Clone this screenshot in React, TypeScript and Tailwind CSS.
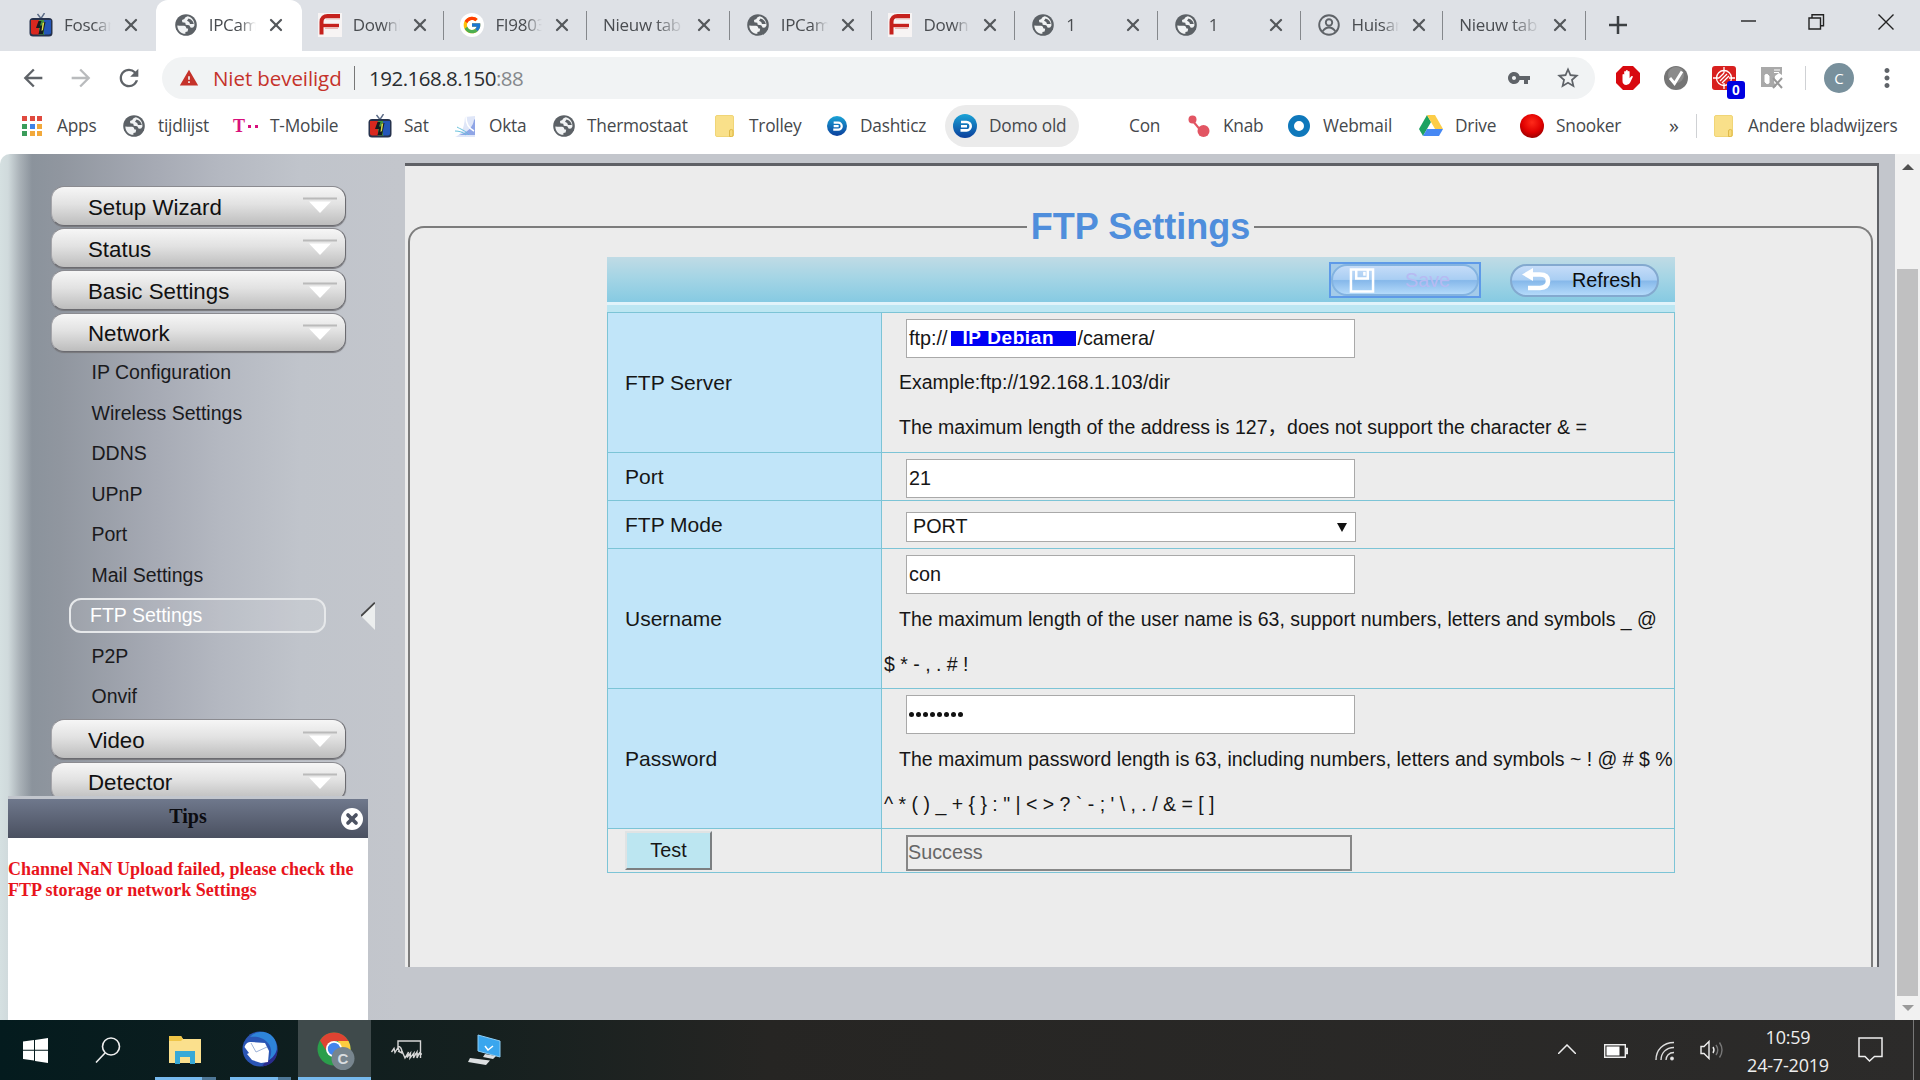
import { ReactNode } from "react";
import { LuX } from "react-icons/lu";
import { FcGoogle } from "react-icons/fc";
import { MdArrowBack, MdArrowForward, MdRefresh, MdStarBorder, MdVpnKey, MdWarning, MdMoreVert } from "react-icons/md";

const Globe = () => (
    <svg viewBox="0 0 22 22" className="h-[22px] w-[22px] shrink-0">
        <circle cx="11" cy="11" r="10.8" fill="#5c6166" />
        <path d="M2.300 11.500c2 .2 4.500.3 6.500.2 2 .2 2.600 1.300 2.400 2.600l2 .5-.6 2.800-2.200.4v1.800c-4.500 0-8-3.600-8.100-8.300Z" fill="#f1f3f4" />
        <path d="M12.800 2.300c-1.800.5-3 1.400-3.400 2.700L7 6l.3 2.300 3 .4.400 2 3.500.5 1.600 2.500 2.300-.2 1.300-1.700c.5-4.500-2.300-8.300-6.600-9.500Z" fill="#f1f3f4" />
        <path d="M13.500 4.500 12 6.800l2.200 1.200.8 1.900h3.800c-.6-2.600-2.400-4.600-5.300-5.400Z" fill="#5c6166" />
    </svg>
);

const TvIcon = () => (
    <svg viewBox="0 0 24 24" className="h-6 w-6 shrink-0">
        <path d="M8.500 1 12 5.500 15.500 0" fill="none" stroke="#5b6b86" strokeWidth="1.400" />
        <rect x="0.500" y="5" width="23" height="18.500" rx="3.500" fill="#26324d" />
        <path d="M2 7h8v14.500H4a2 2 0 0 1-2-2Z" fill="#d9281f" />
        <path d="M10 7h6v14.500h-6Z" fill="#3f9440" />
        <path d="M15 7h7v12.500a2 2 0 0 1-2 2h-5Z" fill="#2456b8" />
        <path d="m9.500 8-2.500 7h4l-1.500 6 4.500 0 2.500-12-2.500 0-1 3.500h-2l1.500-4.500Z" fill="#151a20" />
        <path d="m13.500 10 1.800-1-1.300 8-1.500 1Z" fill="#d9e04a" />
    </svg>
);

const FIcon = () => (
    <svg viewBox="0 0 24 24" className="h-6 w-6 shrink-0">
        <path d="M0 0h24v24H0Z" fill="#f7f4f4" />
        <path d="M3.500 21.500V9C3.500 5 6 3 9.500 3H22" fill="none" stroke="#c5211d" strokeWidth="4" />
        <path d="M4 12.500h17" stroke="#c5211d" strokeWidth="3.400" />
        <path d="M8 5.800h14M7 15.200h13" stroke="#e3a09c" strokeWidth="1" />
    </svg>
);

const GoogleIcon = () => (
    <span className="flex h-6 w-6 shrink-0 items-center justify-center rounded-full bg-white">
        <FcGoogle className="h-5 w-5" />
    </span>
);

const PersonIcon = () => (
    <svg viewBox="0 0 22 22" className="h-[22px] w-[22px] shrink-0" fill="none" stroke="#5f6368" strokeWidth="1.900">
        <circle cx="11" cy="11" r="9.800" />
        <circle cx="11" cy="8.500" r="3.200" />
        <path d="M4.500 17.500c2-3 4-4 6.500-4s4.500 1 6.500 4" />
    </svg>
);

const AppsIcon = () => (
    <span className="grid grid-cols-3 gap-[2.5px]">
        {["#e04a3f", "#e04a3f", "#e04a3f", "#3b9c5a", "#3f83e8", "#f2a93b", "#3b9c5a", "#f2a93b", "#f2a93b"].map((color, i) => (
            <i key={i} className="h-[5px] w-[5px]" style={{ background: color }} />
        ))}
    </span>
);

const TMobileIcon = () => (
    <span className="flex w-[26px] items-center">
        <b className="font-['Liberation_Serif',serif] text-[18px] leading-none text-[#d8107c]">T</b>
        <i className="ml-[3px] h-[3px] w-[3px] bg-[#d8107c]" />
        <i className="ml-[4px] h-[3px] w-[3px] bg-[#d8107c]" />
    </span>
);

const OktaIcon = () => (
    <svg viewBox="0 0 24 24" className="h-6 w-6">
        <path d="M12 3 22 2v21H2c5-2 9-6 10-20Z" fill="#dfe6f8" />
        <path d="M21 6c-1 6-5 12-15 15h16V5Z" fill="#8fa5e6" />
        <path d="M4 13c3 2 8 3 12 8M2 17c4 0 8 1 11 4" stroke="#67c1dc" fill="none" />
        <path d="M13 3c0 6 2 11 8 14" stroke="#fff" fill="none" strokeWidth="1.500" />
    </svg>
);

const FolderIcon = () => (
    <svg viewBox="0 0 20 22" className="h-[22px] w-5">
        <rect x="0.500" y="0.500" width="18" height="21" rx="1.500" fill="#f9e08a" stroke="#f0d577" />
        <path d="M14.500 21.500v-5.500q0-1.500 1.800-1.500t1.700 1.500v4q0 1.500-1.500 1.500Z" fill="#f7da78" stroke="#dfba4b" />
    </svg>
);

const DomoIcon = ({ small }: { small?: boolean }) => (
    <svg viewBox="0 0 24 24" className={small ? "h-5 w-5" : "h-6 w-6"}>
        <defs>
            <linearGradient id="domo" x1="0" y1="0" x2="0" y2="1">
                <stop stopColor="#1ba3d6" />
                <stop offset="1" stopColor="#0a3f9c" />
            </linearGradient>
        </defs>
        <circle cx="12" cy="12" r="12" fill="url(#domo)" />
        <path d="M8 8h5.500a4.200 4.200 0 0 1 0 8.400H7.500M8 12.200h6" fill="none" stroke="#fff" strokeWidth="2.600" />
    </svg>
);

const KnabIcon = () => (
    <svg viewBox="0 0 22 22" className="h-[22px] w-[22px]" fill="#e25563">
        <circle cx="4.500" cy="4.500" r="4" />
        <circle cx="15.500" cy="16" r="6" />
        <path d="m4 5 10 12" stroke="#e25563" strokeWidth="2" />
    </svg>
);

const RingIcon = () => <span className="h-[22px] w-[22px] rounded-full border-[6.500px] border-[#0f78bb]" />;

const DriveIcon = () => (
    <svg viewBox="0 0 24 22" className="h-[22px] w-6">
        <path d="M8 0 0 14l4 7 8-14Z" fill="#1da261" />
        <path d="M8 0h8l8 14h-8Z" fill="#fccd48" />
        <path d="m8 14-4 7h16l4-7Z" fill="#4688f4" />
    </svg>
);

const BallIcon = () => <span className="h-6 w-6 rounded-full bg-[radial-gradient(circle_at_50%_35%,#ff2a1a_0%,#e00000_50%,#6d0000_100%)]" />;

type Tab = { icon?: ReactNode; title: string; active?: boolean; line?: boolean };

const tabs: Tab[] = [
    { icon: <TvIcon />, title: "Foscam" },
    { icon: <Globe />, title: "IPCam", active: true },
    { icon: <FIcon />, title: "Downl", line: true },
    { icon: <GoogleIcon />, title: "FI9803", line: true },
    { title: "Nieuw tab", line: true },
    { icon: <Globe />, title: "IPCam", line: true },
    { icon: <FIcon />, title: "Downl", line: true },
    { icon: <Globe />, title: "1", line: true },
    { icon: <Globe />, title: "1", line: true },
    { icon: <PersonIcon />, title: "Huisar", line: true },
    { title: "Nieuw tab", line: true },
];

const tabBox = (i: number) => {
    if (i === 0) return "w-[138.700px] pl-3";
    if (i === 1) return "w-[146px] rounded-t-[12px] bg-white pl-[18px]";
    return "w-[142.700px] pl-4";
};

const TabStrip = () => (
    <div className="flex h-[51px] bg-[#dee1e6] pl-[17px]">
        {tabs.map((tab, i) => (
            <div key={i} className={`relative flex shrink-0 items-center pb-px ${tabBox(i)}`}>
                {tab.icon && <span className="mr-[11px] flex w-6 justify-center">{tab.icon}</span>}
                <span className={`overflow-hidden whitespace-nowrap text-[17px] tracking-[-0.300px] text-[#4a4d51] [mask-image:linear-gradient(90deg,#000_65%,transparent)] ${tab.icon ? "w-[47px]" : "w-[81px]"}`}>
                    {tab.title}
                </span>
                <LuX className="ml-2.5 h-[20px] w-[20px] shrink-0 text-[#55585c]" strokeWidth={2.700} />
                {tab.line && <span className="absolute top-[11px] right-0 h-[29px] w-px bg-[#85888c]" />}
            </div>
        ))}
        <svg viewBox="0 0 18 18" className="mt-4 ml-[23px] h-[18px] w-[18px]">
            <path d="M9 0v18M0 9h18" stroke="#3c4043" strokeWidth="2.500" />
        </svg>
        <div className="ml-auto flex pt-3.5 pr-[26px] text-[#222]">
            <svg viewBox="0 0 153 16" className="h-4 w-[153px]" fill="none" stroke="currentColor" strokeWidth="1.400">
                <path d="M0 7h15" />
                <path d="M68 4h11.500v11H68ZM71 4V.8h11.500v11H80" />
                <path d="m137.500.5 15 15m0-15-15 15" />
            </svg>
        </div>
    </div>
);

const AddressBar = () => (
    <div className="flex h-[54px] items-center pl-[19px] text-[#5f6368]">
        <MdArrowBack className="h-7 w-7" />
        <MdArrowForward className="ml-5 h-7 w-7 text-[#b9bbbd]" />
        <MdRefresh className="ml-5 h-7 w-7" />
        <div className="ml-[19px] flex h-[42px] w-[1433px] items-center rounded-full bg-[#f1f3f4] pl-[17px]">
            <MdWarning className="h-5 w-5 text-[#c5322a]" />
            <span className="ml-[14px] w-[141px] whitespace-nowrap text-[20.500px] tracking-[-0.080px] text-[#c5322a]">Niet beveiligd</span>
            <span className="h-6 w-px bg-[#777]" />
            <span className="ml-[14px] text-[20.500px] tracking-[-0.500px] text-[#2a2d30]">
                192.168.8.150<span className="text-[#85888c]">:88</span>
            </span>
            <MdVpnKey className="mr-[24px] ml-auto h-6 w-6" />
            <MdStarBorder className="mr-[14px] h-[26px] w-[26px]" />
        </div>
        <svg viewBox="0 0 24 24" className="ml-[21px] h-6 w-6">
            <path d="M7 0h10l7 7v10l-7 7H7l-7-7V7Z" fill="#d8090f" />
            <path d="M6.500 12.500V8.600q.9-1.300 1.700 0V5.600q.9-1.200 1.700 0V4.500q1-1.200 1.900 0v1q.9-1.200 1.800 0v6.700l1.600-2q1.600-.6 1.700.5l-2.600 5.500q-1.200 2.900-4 2.900-3.800-.3-3.800-4Z" fill="#fff" />
        </svg>
        <svg viewBox="0 0 24 24" className="ml-6 h-6 w-6">
            <circle cx="12" cy="12" r="12" fill="#757575" />
            <circle cx="12" cy="9" r="8" fill="#8b8b8b" />
            <path d="m6 12 4.500 5.500L18 5.500" fill="none" stroke="#fff" strokeWidth="2.800" />
        </svg>
        <span className="relative ml-6">
            <svg viewBox="0 0 24 24" className="h-6 w-6">
                <rect width="24" height="24" rx="3" fill="#d8201f" />
                <g fill="none" stroke="#fff" strokeWidth="1.300">
                    <circle cx="12" cy="12" r="7.500" />
                    <path d="M12 1v6M12 17v6M1 12h6M17 12h6M8 15l7-7M10 17l7-7M7 12l5-5" />
                </g>
            </svg>
            <b className="absolute top-[15px] left-[15px] flex h-[18px] w-[18px] items-center justify-center rounded-[3px] bg-[#0000e0] font-['Liberation_Sans',sans-serif] text-[14px] text-white">0</b>
        </span>
        <svg viewBox="0 0 22 22" className="ml-[25px] h-[22px] w-[22px]">
            <path d="M0 0h21v8l-3-2-4 3-1 6 2 5H0Z" fill="#a9a9a9" />
            <path d="M4 8q2-2 4 1v7q-2 2-4-1ZM13 3h6M13 5.500h5" fill="#fff" stroke="#fff" />
            <path d="m12 11 9 10m0-10-9 10" stroke="#999" strokeWidth="2" />
        </svg>
        <span className="ml-[22px] h-6 w-px bg-[#cfd1d4]" />
        <span className="ml-[18px] flex h-[30px] w-[30px] items-center justify-center rounded-full bg-[#78909c] text-[15px] text-white">C</span>
        <MdMoreVert className="ml-[18px] h-[30px] w-[30px]" />
    </div>
);

// box is the distance to the next bookmark's icon
const bookmarks = [
    { icon: <AppsIcon />, label: "Apps", box: "w-[101px]", slot: "w-[35px]" },
    { icon: <Globe />, label: "tijdlijst", box: "w-[110px]", slot: "w-[35px]" },
    { icon: <TMobileIcon />, label: "T-Mobile", box: "w-[135px]", slot: "w-[37px]" },
    { icon: <TvIcon />, label: "Sat", box: "w-[85px]", slot: "w-[36px]" },
    { icon: <OktaIcon />, label: "Okta", box: "w-[100px]", slot: "w-[36px]" },
    { icon: <Globe />, label: "Thermostaat", box: "w-[162px]", slot: "w-[34px]" },
    { icon: <FolderIcon />, label: "Trolley", box: "w-[112px]", slot: "w-[34px]" },
    { icon: <DomoIcon small />, label: "Dashticz", box: "w-[118px]", slot: "w-[33px]" },
    { icon: <DomoIcon />, label: "Domo old", box: "w-[134px] rounded-full bg-[#ebebeb] pl-2", slot: "w-[36px]" },
    { icon: null, label: "Con", box: "w-[109px] pl-3.5", slot: "w-[36px]" },
    { icon: <KnabIcon />, label: "Knab", box: "w-[100px]", slot: "w-[35px]" },
    { icon: <RingIcon />, label: "Webmail", box: "w-[131px]", slot: "w-[35px]" },
    { icon: <DriveIcon />, label: "Drive", box: "w-[101px]", slot: "w-[36px]" },
    { icon: <BallIcon />, label: "Snooker", box: "w-[149px]", slot: "w-[36px]" },
];

const Bookmarks = () => (
    <div className="flex h-[42px] items-center pl-[22px] text-[17.300px] tracking-[-0.220px] text-[#45484c]">
        {bookmarks.map((item) => (
            <div key={item.label} className={`flex h-[42px] shrink-0 items-center whitespace-nowrap ${item.box}`}>
                <span className={`flex shrink-0 ${item.slot}`}>{item.icon}</span>
                {item.label}
            </div>
        ))}
        <span className="w-[27px] shrink-0 text-[20px] leading-none">»</span>
        <span className="mr-[17px] h-6 w-px bg-[#cfd1d4]" />
        <FolderIcon />
        <span className="ml-[14px] whitespace-nowrap">Andere bladwijzers</span>
    </div>
);

const MenuButton = ({ label }: { label: string }) => (
    <div className="ml-[51px] flex h-[39.500px] w-[295px] shrink-0 items-center rounded-[13px] border border-t-[#8b8b90] border-r-[#6b6b70] border-b-[#6b6b70] border-l-[#a5a5aa] bg-[linear-gradient(#f6f6f6,#e2e2e2_45%,#bdbdbd)] pt-[3px] pl-9 text-[22.300px] text-[#111] shadow-[0_1px_1px_#77777b]">
        {label}
        <svg viewBox="0 0 34 18" className="mr-2 mb-0.5 ml-auto h-[18px] w-[34px]">
            <path d="M0 1.500h34" stroke="#bababa" strokeWidth="2" />
            <path d="M6 4.500h22L17 16Z" fill="#fff" />
        </svg>
    </div>
);

const subItems = ["IP Configuration", "Wireless Settings", "DDNS", "UPnP", "Port", "Mail Settings", "FTP Settings", "P2P", "Onvif"];

const Sidebar = () => (
    <div className="flex w-[405px] shrink-0 flex-col gap-[2.700px] pt-8">
        {["Setup Wizard", "Status", "Basic Settings", "Network"].map((label) => (
            <MenuButton key={label} label={label} />
        ))}
        <div className="-mt-[2px] -mb-[3px] flex h-[367px] shrink-0 flex-col text-[19.500px] text-[#1a1a1d]">
            {subItems.map((label) =>
                label === "FTP Settings" ? (
                    <div key={label} className="flex h-[40.500px] items-center pb-px pl-[69px] text-white">
                        <span className="flex h-[35px] w-[257px] items-center rounded-[12px] border-2 border-[#e6e8ea] bg-white/10 pt-px pl-[19px]">{label}</span>
                        <svg viewBox="0 0 14 28" className="ml-[35px] h-7 w-3.5">
                            <path d="M0 14 14 0v28Z" fill="#eceeee" />
                            <path d="M0 14 14 .5" stroke="#444" strokeWidth="1.800" />
                        </svg>
                    </div>
                ) : (
                    <div key={label} className="flex h-[40.500px] items-center pl-[91.500px]">{label}</div>
                )
            )}
        </div>
        <MenuButton label="Video" />
        <MenuButton label="Detector" />
    </div>
);

// popup that covers the lower end of the menu
const Tips = () => (
    <div className="absolute top-[642px] left-2 h-[224px] w-[360px] border-t-[3px] border-[#c2c6cd] bg-white font-['Liberation_Serif',serif] font-bold">
        <div className="relative flex h-[39px] justify-center bg-[linear-gradient(#6f788c,#4a5060)] pt-1 text-[20px] leading-[26px] text-[#0b0b10]">
            Tips
            <span className="absolute top-[9px] right-[5px] flex h-[22px] w-[22px] items-center justify-center rounded-full bg-white">
                <LuX className="h-[16px] w-[16px] text-[#4c5262]" strokeWidth={5.500} />
            </span>
        </div>
        <p className="mt-[21px] whitespace-nowrap text-[18px] leading-[21px] text-[#e8141c]">
            Channel NaN Upload failed, please check the
            <br />
            FTP storage or network Settings
        </p>
    </div>
);

const TextBox = ({ children }: { children: ReactNode }) => (
    <div className="ml-[23px] flex h-[39px] w-[449px] shrink-0 items-center border border-[#a9a9a9] bg-white pl-[2px] text-[19.800px] whitespace-pre">
        {children}
    </div>
);

const Row = ({ label, height, children }: { label: ReactNode; height: string; children: ReactNode }) => (
    <div className={`flex border-b border-[#7cc4d6] ${height}`}>
        <div className={`flex w-[274px] shrink-0 items-center border-r border-[#7cc4d6] pl-[17px] text-[21px] ${label === "Test" ? "" : "bg-[#c1e5f9] pt-px"}`}>
            {label === "Test" ? (
                <button className="h-[39px] w-[87px] border-2 border-t-[#dfe3e4] border-r-[#7b7f81] border-b-[#7b7f81] border-l-[#dfe3e4] bg-[#bce6f1] text-[19.800px]">Test</button>
            ) : (
                label
            )}
        </div>
        <div className="min-w-0 flex-1 pl-px">{children}</div>
    </div>
);

const Hint = ({ children }: { children: ReactNode }) => (
    <p className="pl-px indent-[15px] text-[19.500px] leading-[45px] whitespace-nowrap">{children}</p>
);

const FtpTable = () => (
    <div className="w-[1068px] text-[#161616]">
        <div className="flex h-[45px] items-center justify-end bg-[linear-gradient(#c0dbe5,#a5d5e5_45%,#86cae2)] pt-px text-[19.800px]">
            <button className="flex h-[36px] w-[152px] items-center border-2 border-[#5e9ae8] bg-[#a4cbe9]">
                <span className="flex h-8 w-[148px] items-center rounded-full border-2 border-[#83b3e0] bg-[linear-gradient(#c5dcf8,#a9cef3_48%,#86b8ea_52%,#b4dafa)] pl-4">
                    <svg viewBox="0 0 26 26" className="h-[25px] w-[26px]" fill="none" stroke="#fff" strokeWidth="2.600">
                        <path d="M1.500 1.500h23v23h-23ZM7 2v9h12V2" />
                        <path d="M15.500 4v4" />
                    </svg>
                    <span className="ml-[30px] pt-px text-[#b7baf2]">Save</span>
                </span>
            </button>
            <button className="mr-4 ml-[29px] flex h-[33px] w-[149px] items-center rounded-full border-2 border-[#83a9cf] bg-[linear-gradient(#c5dcf8,#a9cef3_48%,#86b8ea_52%,#b4dafa)] pl-[10px]">
                <svg viewBox="0 0 30 24" className="h-6 w-[30px]">
                    <path d="M8 6.500h10q8 0 8 6.500t-8 7H6" fill="none" stroke="#fff" strokeWidth="4.600" />
                    <path d="M0 6.500 11 0v13Z" fill="#fff" />
                </svg>
                <span className="ml-[20px] pt-px text-[#0c0c0c]">Refresh</span>
            </button>
        </div>
        <div className="h-[10px] border-t-[3px] border-[#e1f3fa] bg-[#bce6f2]" />
        <div className="border-t border-l border-[#7cc4d6] [&>div]:border-r">
            <Row label="FTP Server" height="h-[140px]">
                <div className="pt-[6px]">
                    <TextBox>
                        ftp://
                        <b className="mr-px ml-[4px] flex h-[15px] w-[125px] items-center bg-[#0000f5] pl-[11px] text-[19px] tracking-[0.600px] text-white">IP Debian</b>
                        /camera/
                    </TextBox>
                    <div className="pt-[2px]">
                        <Hint>Example:ftp://192.168.1.103/dir</Hint>
                        <Hint>
                            The maximum length of the address is 127<span className="font-['Noto_Sans_CJK_SC',sans-serif] leading-none">，</span>does not support the character &amp; =
                        </Hint>
                    </div>
                </div>
            </Row>
            <Row label="Port" height="h-[48px]">
                <div className="pt-[6px]">
                    <TextBox>21</TextBox>
                </div>
            </Row>
            <Row label="FTP Mode" height="h-[48px]">
                <div className="mt-[11px] ml-[23px] flex h-[30px] w-[450px] items-center border border-[#a9a9a9] bg-white pr-2 pl-[6px] text-[19.800px]">
                    PORT
                    <svg viewBox="0 0 10 9" className="ml-auto h-[9px] w-[10px]">
                        <path d="M0 0h10L5 9Z" fill="#111" />
                    </svg>
                </div>
            </Row>
            <Row label="Username" height="h-[140px]">
                <div className="pt-[6px]">
                    <TextBox>con</TextBox>
                    <div className="pt-[3px]">
                        <Hint>
                            The maximum length of the user name is 63, support numbers, letters and symbols _ @<br />$ * - , . # !
                        </Hint>
                    </div>
                </div>
            </Row>
            <Row label="Password" height="h-[140px]">
                <div className="pt-[6px]">
                    <TextBox>
                        <span className="flex gap-[2px]">
                            {[...Array(8)].map((_, i) => (
                                <i key={i} className="h-[5px] w-[5px] rounded-full bg-[#111]" />
                            ))}
                        </span>
                    </TextBox>
                    <div className="pt-[3px]">
                        <Hint>
                            The maximum password length is 63, including numbers, letters and symbols ~ ! @ # $ %<br />
                            {"^ * ( ) _ + { } : \" | < > ? ` - ; ' \\ , . / & = [ ]"}
                        </Hint>
                    </div>
                </div>
            </Row>
            <Row label="Test" height="h-[44px]">
                <div className="mt-[6px] ml-[23px] flex h-[36px] w-[446px] items-center border-2 border-[#878787] text-[19.800px] text-[#666]">Success</div>
            </Row>
        </div>
    </div>
);

const Panel = () => (
    <div className="mt-[9px] flex h-[804px] w-[1474px] shrink-0 flex-col overflow-hidden border-t-[3px] border-r-2 border-[#5f6166] bg-[#ececec]">
        <fieldset className="mt-[41px] mr-[4px] ml-[3px] flex flex-1 flex-col items-center rounded-t-[16px] border-2 border-b-0 border-[#7c7c7c]">
            <legend className="mx-auto px-[4px] text-[36px] leading-[40px] font-bold text-[#4f8edc]">FTP Settings</legend>
            <div className="mt-[10px] ml-px">
                <FtpTable />
            </div>
        </fieldset>
    </div>
);

const Scrollbar = () => (
    <div className="ml-auto flex w-[25px] flex-col items-center bg-[#f1f1f1]">
        <svg viewBox="0 0 12 6" className="mt-[10px] h-[6px] w-3">
            <path d="M0 6h12L6 0Z" fill="#505050" />
        </svg>
        <div className="mt-[99px] h-[727px] w-[21px] bg-[#c0c0c1]" />
        <svg viewBox="0 0 12 6" className="mt-[9px] h-[6px] w-3">
            <path d="M0 0h12L6 6Z" fill="#9a9a9a" />
        </svg>
    </div>
);

const Taskbar = () => (
    <div className="flex h-[60px] items-stretch bg-[linear-gradient(90deg,#041b1e,#15201f_25%,#262523_40%,#2c2b2a)] font-['Open_Sans',sans-serif] text-[#eee]">
        <svg viewBox="0 0 25 25" className="mt-[18px] ml-[23px] h-[25px] w-[25px]" fill="#fff">
            <path d="M0 3.500 11 2v9.800H0ZM12 1.900 25 0v11.800H12ZM0 12.800h11v9.800L0 21ZM12 12.800h13V25l-13-2Z" />
        </svg>
        <svg viewBox="0 0 26 26" className="mt-[17px] ml-[47px] h-[26px] w-[26px]" fill="none" stroke="#eee" strokeWidth="1.600">
            <circle cx="16" cy="9.500" r="8.500" />
            <path d="M10 16 1 25.500" />
        </svg>
        <div className="ml-[34px] flex w-[61px] flex-col items-center justify-between pt-[16px]">
            <svg viewBox="0 0 32 28" className="mr-0.5 h-7 w-8">
                <path d="M0 0h12l2 3h18v24H0Z" fill="#fbe08d" />
                <path d="M0 0h12l2 3-2 2H0Z" fill="#efc547" />
                <path d="M6 28V15h20v13h-5v-7H11v7Z" fill="#38a9d6" />
            </svg>
            <span className="flex h-[3px] w-full bg-[#4e7796]"><i className="w-[47px] bg-[#76b9ed]" /></span>
        </div>
        <div className="ml-[14px] flex w-[61px] flex-col items-center justify-between pt-[11px]">
            <svg viewBox="0 0 36 36" className="mr-px h-9 w-9">
                <circle cx="18" cy="18" r="17.500" fill="#2a55b4" />
                <path d="M8 6C14-1 28-1 33 9c4 9 1 20-9 25 6-8 7-16 2-22S14 5 8 6Z" fill="#2e84d8" />
                <path d="M20 35.500c11-1 16-9 15.500-18-3 8-6 11-12 13Z" fill="#2a2c8c" />
                <path d="M2.500 16C4 12 6 11 9 11l14 1 4 8-1 11-7 1-9-3-5-6 2-1Z" fill="#fff" />
                <path d="m9 12 5 9 11-5" fill="none" stroke="#9fb4d8" />
            </svg>
            <span className="flex h-[3px] w-full bg-[#4e7796]"><i className="w-[48px] bg-[#76b9ed]" /></span>
        </div>
        <div className="ml-[7px] flex w-[73px] flex-col items-center justify-between bg-[#3f4a4b] pt-[12px]">
            <svg viewBox="0 0 38 38" className="ml-[3px] h-[38px] w-[38px]">
                <circle cx="17" cy="17" r="16.500" fill="#2b9e4b" />
                <path d="M17 .5A16.500 16.500 0 0 1 31.500 9H17L9.500 19 3 8.500A16.500 16.500 0 0 1 17 .5Z" fill="#df4332" />
                <path d="M31.500 9A16.500 16.500 0 0 1 17 33.500L24.500 19 21 9Z" fill="#fccd40" />
                <circle cx="17" cy="17" r="8" fill="#fff" />
                <circle cx="17" cy="17" r="6.200" fill="#4285ec" />
                <circle cx="26" cy="26.500" r="11.500" fill="#77858e" />
                <text x="26" y="32" textAnchor="middle" fontSize="15" fontWeight="bold" fill="#d9dde0" fontFamily="Liberation Sans, sans-serif">C</text>
            </svg>
            <span className="h-[3px] w-full bg-[#76b9ed]" />
        </div>
        <svg viewBox="0 0 32 22" className="mt-[20px] ml-[20px] h-[22px] w-8" fill="none" stroke="#d6d6d6" strokeWidth="1.400">
            <path d="M7 7V1h22.500v17M.5 12 3 8.500l1 4L7 7.500l1.500 4M7 6q4 1 4 7l-4-2" />
            <path d="m11 11 3 7 3.500-6-1.500 5.500 3.500-4.500-.5 5 4-5-.5 5 3.500-6v6l3-6M24 14h7" />
        </svg>
        <svg viewBox="0 0 34 34" className="mt-[14px] ml-[45px] h-[34px] w-[34px]">
            <path d="M10 1 32 7v16L10 17Z" fill="#3aa6ee" stroke="#8ecdf4" />
            <path d="m17 12 3 4 5-4" fill="none" stroke="#fff" strokeWidth="1.500" />
            <path d="m17 20 11 2-3 3-10-2ZM2 24l20 2.500-4 4.500-18-3Z" fill="#dcdfe1" />
        </svg>
        <div className="ml-auto flex items-start">
            <svg viewBox="0 0 18 10" className="mt-[24px] h-[10px] w-[18px]" fill="none" stroke="#eee" strokeWidth="1.500">
                <path d="m0 10 9-9 9 9" />
            </svg>
            <svg viewBox="0 0 24 14" className="mt-[24px] ml-[28px] h-[14px] w-6">
                <path d="M.7.700h20.600v12.600H.7ZM22 4.500h1.500v5H22Z" fill="none" stroke="#eee" strokeWidth="1.400" />
                <path d="M2.500 2.500h13v9h-13Z" fill="#fff" />
            </svg>
            <svg viewBox="0 0 20 20" className="mt-[21px] ml-[27px] h-5 w-5" fill="none" stroke="#ddd" strokeWidth="1.400">
                <path d="M1 19C1 9 8 1.500 19 1.500M6 19C6 12 11 6.500 19 6.500M11 19c0-4 3-7.500 8-7.500" />
                <circle cx="17" cy="17.500" r="1.200" fill="#fff" />
            </svg>
            <svg viewBox="0 0 24 20" className="mt-[20px] ml-[25px] h-5 w-6" fill="none" stroke="#eee" strokeWidth="1.400">
                <path d="M1 6.500h3L9 1.500v17L4 13.500H1Z" />
                <path d="M13 7q2 3 0 6" />
                <path d="M16 5q3.500 5 0 10M19.500 2.500q5 7.500 0 15" stroke="#777" />
            </svg>
            <div className="ml-[19px] w-[90px] pt-[3px] text-center text-[18px] leading-[28px] tracking-[-0.200px] whitespace-nowrap">
                10:59
                <br />
                24-7-2019
            </div>
            <svg viewBox="0 0 25 25" className="mt-[17px] ml-[25px] h-[25px] w-[25px]" fill="none" stroke="#eee" strokeWidth="1.500">
                <path d="M1 1h23v18.500h-7.500l-5 4.500-4.500-4.500H1Z" />
            </svg>
            <span className="mr-1.5 ml-[30px] h-[60px] w-px bg-[#777]" />
        </div>
    </div>
);

const App = () => {
    return (
        <div className="flex h-[1080px] w-[1920px] flex-col overflow-hidden bg-white font-['Liberation_Sans',sans-serif]">
            <div className="h-[154px] shrink-0 font-['Open_Sans',sans-serif]">
                <TabStrip />
                <AddressBar />
                <Bookmarks />
            </div>
            <div className="relative flex h-[866px] shrink-0 overflow-hidden rounded-tl-[10px] bg-[linear-gradient(90deg,#d5e0e1_0px,#d0dadc_8px,#a9b1b7_20px,#8b939c_32px,#90969f_60px,#a5a9b3_150px,#b4b8c1_220px,#c0c4cb_300px,#c3c6cc_400px)]">
                <Sidebar />
                <Panel />
                <Scrollbar />
                <Tips />
            </div>
            <Taskbar />
        </div>
    );
};

export default App;
